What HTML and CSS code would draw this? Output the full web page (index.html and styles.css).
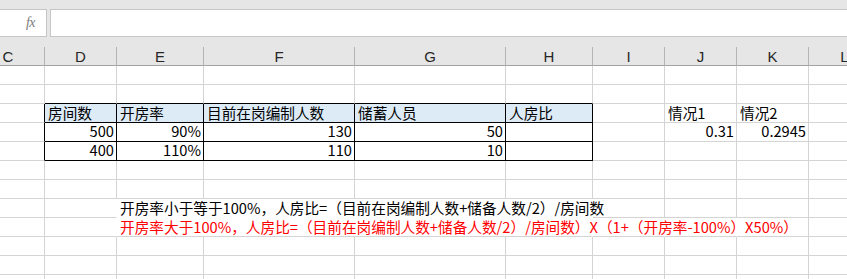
FILE: index.html
```html
<!DOCTYPE html>
<html lang="zh-CN">
<head>
<meta charset="utf-8">
<title>Sheet</title>
<link rel="stylesheet" href="styles.css">
</head>
<body>
<div class="app">
  <div class="toolbar">
    <div class="namebox"><span class="fx">fx</span></div>
    <div class="formula"></div>
  </div>
  <div class="sheet">
    <div class="h">C</div><div class="h">D</div><div class="h">E</div><div class="h">F</div><div class="h">G</div><div class="h">H</div><div class="h">I</div><div class="h">J</div><div class="h">K</div><div class="h">L</div>

    <div class="c"></div><div class="c"></div><div class="c"></div><div class="c"></div><div class="c"></div><div class="c"></div><div class="c"></div><div class="c"></div><div class="c"></div><div class="c"></div>

    <div class="c"></div><div class="c tb"></div><div class="c tb"></div><div class="c tb"></div><div class="c tb"></div><div class="c tb"></div><div class="c"></div><div class="c"></div><div class="c"></div><div class="c"></div>

    <div class="c rb"></div><div class="c t th">房间数</div><div class="c t th">开房率</div><div class="c t th">目前在岗编制人数</div><div class="c t th">储蓄人员</div><div class="c t th">人房比</div><div class="c"></div><div class="c">情况1</div><div class="c">情况2</div><div class="c"></div>

    <div class="c rb"></div><div class="c t n">500</div><div class="c t n">90%</div><div class="c t n">130</div><div class="c t n">50</div><div class="c t"></div><div class="c"></div><div class="c n">0.31</div><div class="c n">0.2945</div><div class="c"></div>

    <div class="c rb"></div><div class="c t n">400</div><div class="c t n">110%</div><div class="c t n">110</div><div class="c t n">10</div><div class="c t"></div><div class="c"></div><div class="c"></div><div class="c"></div><div class="c"></div>

    <div class="c"></div><div class="c"></div><div class="c"></div><div class="c"></div><div class="c"></div><div class="c"></div><div class="c"></div><div class="c"></div><div class="c"></div><div class="c"></div>

    <div class="c"></div><div class="c"></div><div class="c"></div><div class="c"></div><div class="c"></div><div class="c"></div><div class="c"></div><div class="c"></div><div class="c"></div><div class="c"></div>

    <div class="c"></div><div class="c nr"></div><div class="c span4 nr nb">开房率小于等于100%，人房比=（目前在岗编制人数+储备人数/2）/房间数</div><div class="c"></div><div class="c"></div><div class="c"></div><div class="c"></div>

    <div class="c"></div><div class="c nr"></div><div class="c span4 nr red">开房率大于100%，人房比=（目前在岗编制人数+储备人数/2）/房间数）X（1+（开房率-100%）X50%）</div><div class="c nr"></div><div class="c nr"></div><div class="c"></div><div class="c"></div>

    <div class="c"></div><div class="c"></div><div class="c"></div><div class="c"></div><div class="c"></div><div class="c"></div><div class="c"></div><div class="c"></div><div class="c"></div><div class="c"></div>

    <div class="c"></div><div class="c"></div><div class="c"></div><div class="c"></div><div class="c"></div><div class="c"></div><div class="c"></div><div class="c"></div><div class="c"></div><div class="c"></div>

    <div class="c"></div><div class="c"></div><div class="c"></div><div class="c"></div><div class="c"></div><div class="c"></div><div class="c"></div><div class="c"></div><div class="c"></div><div class="c"></div>
  </div>
</div>
</body>
</html>
```

FILE: styles.css
```css
html, body {
  margin: 0;
  padding: 0;
  background: #ffffff;
  overflow: hidden;
}

.app {
  width: 847px;
  height: 279px;
  overflow: hidden;
  background: #ffffff;
}

.toolbar {
  display: flex;
  align-items: flex-start;
  gap: 3px;
  height: 47px;
  padding-top: 9px;
  box-sizing: border-box;
  background: #e6e6e6;
}

.namebox {
  width: 47px;
  height: 28px;
  box-sizing: border-box;
  background: #ffffff;
  border: 1px solid #c6c6c6;
  border-left: none;
  display: flex;
  align-items: center;
  justify-content: flex-end;
  padding-right: 11px;
}

.fx {
  font-family: "Liberation Serif", serif;
  font-style: italic;
  font-size: 14px;
  color: #7c7c7c;
  line-height: 1;
  letter-spacing: -0.5px;
}

.formula {
  flex: 1;
  height: 28px;
  box-sizing: border-box;
  background: #ffffff;
  border: 1px solid #c6c6c6;
  border-right: none;
}

.sheet {
  display: grid;
  grid-template-columns: 73px 72px 87px 151px 151px 87px 72px 72px 72px 72px;
  grid-auto-rows: 19px;
  margin-left: -28px;
  width: 909px;
}

.h {
  box-sizing: border-box;
  background: #e6e6e6;
  border-right: 1px solid #b4b4b4;
  border-bottom: 1px solid #a2a2a2;
  text-align: center;
  font-family: "Liberation Sans", Arial, sans-serif;
  font-size: 15px;
  line-height: 18px;
  padding-top: 1px;
  color: #262626;
}

.c {
  box-sizing: border-box;
  border-right: 1px solid #d4d4d4;
  border-bottom: 1px solid #d4d4d4;
  padding: 0 2px 0 3px;
  font-family: "Noto Sans CJK SC", "Noto Sans", sans-serif;
  font-size: 14.67px;
  line-height: 18px;
  color: #000000;
  white-space: nowrap;
  overflow: visible;
}

.n {
  text-align: right;
  line-height: 16px;
}

.t {
  border-right-color: #000000;
  border-bottom-color: #000000;
}

.th {
  background: #ddebf7;
}

.tb {
  border-bottom-color: #000000;
}

.rb {
  border-right-color: #000000;
}

.nr {
  border-right-color: transparent;
}

.nb {
  border-bottom-color: transparent;
}

.span4 {
  grid-column: span 4;
}

.red {
  color: #ff0000;
}
```
